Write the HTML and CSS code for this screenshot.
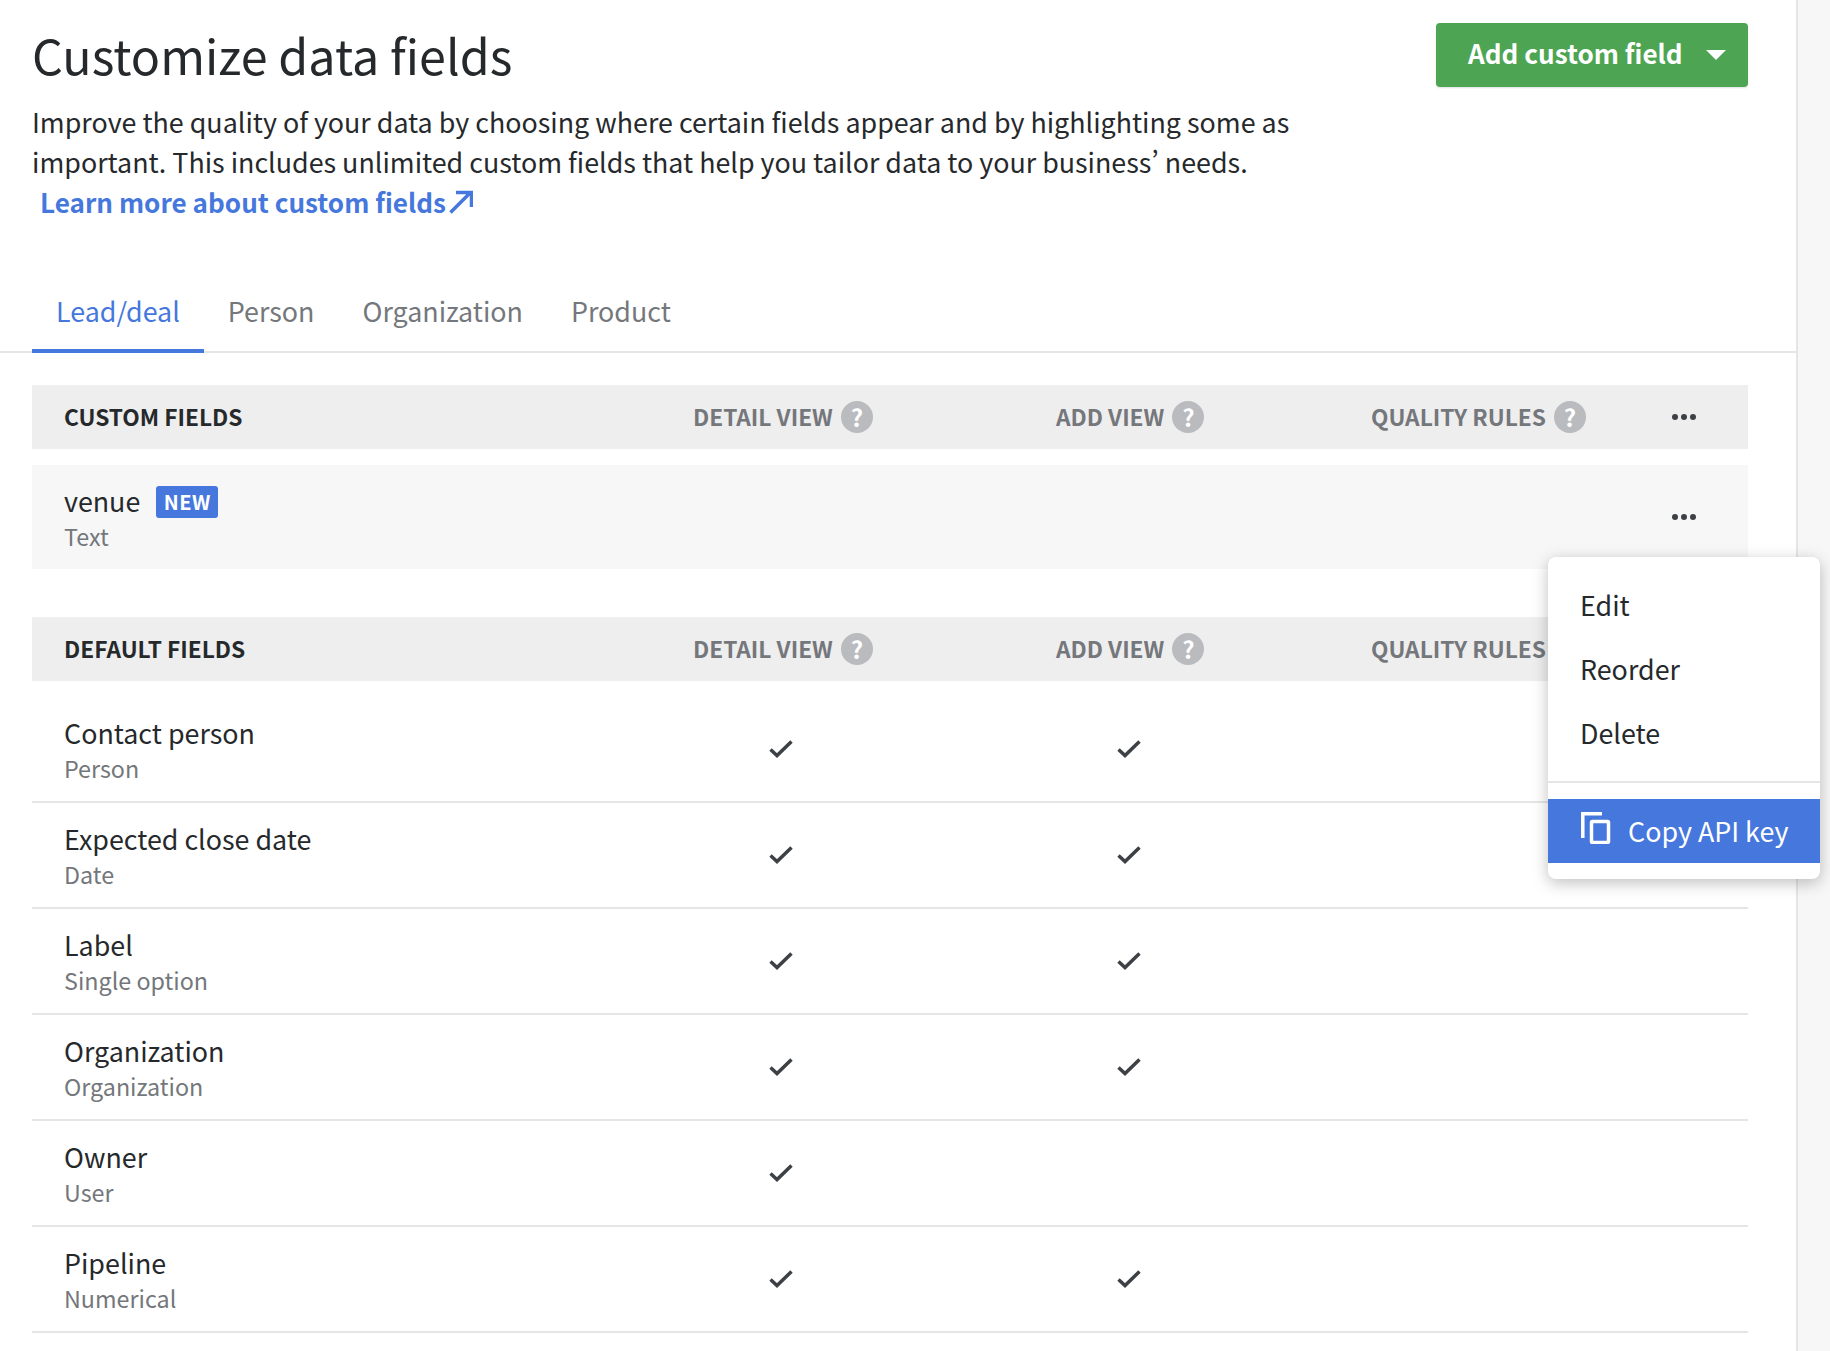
FILE: index.html
```html
<!DOCTYPE html>
<html lang="en">
<head>
<meta charset="UTF-8">
<meta name="viewport" content="width=device-width, initial-scale=1.0">
<title>Customize data fields</title>
<link rel="stylesheet" href="styles.css">
</head>
<body>
<div class="page">
    <main class="main">
        <header class="top">
            <div class="intro">
                <h1>Customize data fields</h1>
                <p>Improve the quality of your data by choosing where certain fields appear and by highlighting some as important. This includes unlimited custom fields that help you tailor data to your business’ needs.</p>
                <a class="learn" href="#">Learn more about custom fields<svg width="24" height="24" viewBox="0 0 24 24" fill="none" stroke="currentColor" stroke-width="3.500"><path d="M1.500 22.500 22 2M7 2.500h15.500V17"/></svg></a>
            </div>
            <button class="add-btn">Add custom field<span class="caret"></span></button>
        </header>

        <nav class="tabs">
            <a class="tab active" href="#">Lead/deal</a>
            <a class="tab" href="#">Person</a>
            <a class="tab" href="#">Organization</a>
            <a class="tab" href="#">Product</a>
        </nav>

        <section class="fields">
            <div class="row head">
                <div class="head-title">CUSTOM FIELDS</div>
                <div class="col-label">DETAIL VIEW<span class="help">?</span></div>
                <div class="col-label">ADD VIEW<span class="help">?</span></div>
                <div class="col-label">QUALITY RULES<span class="help">?</span></div>
                <div class="dots"><i></i><i></i><i></i></div>
            </div>
            <div class="row custom">
                <div>
                    <div class="name">venue<span class="badge">NEW</span></div>
                    <div class="type">Text</div>
                </div>
                <div></div><div></div><div></div>
                <div class="dots"><i></i><i></i><i></i></div>
            </div>
        </section>

        <section class="fields default">
            <div class="row head">
                <div class="head-title">DEFAULT FIELDS</div>
                <div class="col-label">DETAIL VIEW<span class="help">?</span></div>
                <div class="col-label">ADD VIEW<span class="help">?</span></div>
                <div class="col-label">QUALITY RULES</div>
                <div></div>
            </div>
            <div class="rows">
                <div class="row item">
                    <div><div class="name">Contact person</div><div class="type">Person</div></div>
                    <div class="check c1"><svg viewBox="0 0 24 18"><path d="M1.500 9.500 8 15.500 22.500 1.500"/></svg></div>
                    <div class="check c2"><svg viewBox="0 0 24 18"><path d="M1.500 9.500 8 15.500 22.500 1.500"/></svg></div>
                </div>
                <div class="row item">
                    <div><div class="name">Expected close date</div><div class="type">Date</div></div>
                    <div class="check c1"><svg viewBox="0 0 24 18"><path d="M1.500 9.500 8 15.500 22.500 1.500"/></svg></div>
                    <div class="check c2"><svg viewBox="0 0 24 18"><path d="M1.500 9.500 8 15.500 22.500 1.500"/></svg></div>
                </div>
                <div class="row item">
                    <div><div class="name">Label</div><div class="type">Single option</div></div>
                    <div class="check c1"><svg viewBox="0 0 24 18"><path d="M1.500 9.500 8 15.500 22.500 1.500"/></svg></div>
                    <div class="check c2"><svg viewBox="0 0 24 18"><path d="M1.500 9.500 8 15.500 22.500 1.500"/></svg></div>
                </div>
                <div class="row item">
                    <div><div class="name">Organization</div><div class="type">Organization</div></div>
                    <div class="check c1"><svg viewBox="0 0 24 18"><path d="M1.500 9.500 8 15.500 22.500 1.500"/></svg></div>
                    <div class="check c2"><svg viewBox="0 0 24 18"><path d="M1.500 9.500 8 15.500 22.500 1.500"/></svg></div>
                </div>
                <div class="row item">
                    <div><div class="name">Owner</div><div class="type">User</div></div>
                    <div class="check c1"><svg viewBox="0 0 24 18"><path d="M1.500 9.500 8 15.500 22.500 1.500"/></svg></div>
                    <div></div>
                </div>
                <div class="row item">
                    <div><div class="name">Pipeline</div><div class="type">Numerical</div></div>
                    <div class="check c1"><svg viewBox="0 0 24 18"><path d="M1.500 9.500 8 15.500 22.500 1.500"/></svg></div>
                    <div class="check c2"><svg viewBox="0 0 24 18"><path d="M1.500 9.500 8 15.500 22.500 1.500"/></svg></div>
                </div>
            </div>
        </section>
    </main>
    <div class="side"></div>
</div>

<!-- open row menu -->
<div class="menu">
    <a class="menu-item" href="#">Edit</a>
    <a class="menu-item" href="#">Reorder</a>
    <a class="menu-item" href="#">Delete</a>
    <div class="menu-line"></div>
    <a class="menu-item selected" href="#"><svg width="30" height="32" viewBox="0 0 30 32" fill="none" stroke="currentColor" stroke-width="3.500"><path d="M1.800 26V1.800H21"/><rect x="10.500" y="9.500" width="17" height="21" rx="1"/></svg>Copy API key</a>
</div>
</body>
</html>
```

FILE: styles.css
```css
* {
    box-sizing: border-box;
}

html, body {
    margin: 0;
    padding: 0;
    height: 1351px;
    overflow: hidden;
}

body {
    position: relative;
    font-family: "Noto Sans CJK SC", "Noto Sans", sans-serif;
    font-size: 26.85px;
    font-feature-settings: "pwid";
    color: #26292c;
    background-color: #ffffff;
}

a {
    text-decoration: none;
    color: inherit;
}

.page {
    display: flex;
    height: 1351px;
}

.main {
    width: 1798px;
    flex: none;
    border-right: 2px solid #e5e5e5;
}

.side {
    flex: 1;
    background-color: #f7f7f7;
}

/* header */
.top {
    display: flex;
    justify-content: space-between;
    align-items: flex-start;
    padding: 21px 48px 0 32px;
    height: 289px;
}

.intro {
    width: 1290px;
}

h1 {
    margin: 0;
    font-size: 48.4px;
    font-weight: 400;
    line-height: 66px;
}

.intro p {
    margin: 15px 0 0;
    line-height: 40px;
}

.learn {
    display: inline-flex;
    align-items: center;
    gap: 3px;
    margin-left: 8px;
    line-height: 40px;
    font-size: 26.1px;
    font-weight: 700;
    color: #4577dd;
}

.add-btn {
    display: flex;
    align-items: center;
    width: 312px;
    height: 64px;
    margin-top: 2px;
    padding: 0 0 4px 32px;
    border: 0;
    border-radius: 4px;
    font-family: inherit;
    font-size: 26.1px;
    font-weight: 700;
    color: #ffffff;
    background-color: #4da553;
    box-shadow: 0 1px 2px rgba(0, 0, 0, 0.12);
}

.caret {
    margin-left: 23px;
    margin-top: 4px;
    border-left: 10px solid transparent;
    border-right: 10px solid transparent;
    border-top: 10px solid #ffffff;
}

/* tabs */
.tabs {
    display: flex;
    height: 64px;
    padding-left: 32px;
    border-bottom: 2px solid #e5e5e5;
}

.tab {
    height: 64px;
    padding: 0 24px;
    line-height: 44px;
    color: #74777b;
}

.tab.active {
    color: #4577dd;
    border-bottom: 4px solid #4577dd;
}

/* field tables */
.fields {
    margin: 32px 48px 0 32px;
}

.fields.default {
    margin-top: 48px;
}

.row {
    display: grid;
    grid-template-columns: 629px 363px 315px 301px 76px;
    align-items: center;
    padding-left: 32px;
}

.head {
    height: 64px;
    padding-bottom: 2px;
    font-size: 22.7px;
    font-weight: 700;
    background-color: #eeeeee;
}

.col-label {
    display: flex;
    align-items: center;
    color: #74777b;
}

.help {
    display: inline-block;
    width: 32px;
    height: 32px;
    margin-left: 8px;
    margin-bottom: -2px;
    border-radius: 50%;
    font-size: 24px;
    line-height: 32px;
    text-align: center;
    color: #ffffff;
    background-color: #b9bbbe;
}

.dots {
    display: flex;
    gap: 3px;
}

.head .dots {
    margin-bottom: -2px;
}

.dots i {
    width: 6px;
    height: 6px;
    border-radius: 50%;
    background-color: #3d4044;
}

.custom {
    height: 104px;
    margin-top: 16px;
    background-color: #f7f7f7;
}

.name {
    display: flex;
    align-items: center;
    line-height: 38px;
}

.type {
    font-size: 23.3px;
    line-height: 32px;
    color: #74777b;
}

.badge {
    width: 62px;
    height: 32px;
    margin-left: 16px;
    margin-top: 2px;
    border-radius: 3px;
    font-size: 20px;
    font-weight: 700;
    line-height: 32px;
    text-align: center;
    letter-spacing: 0.5px;
    color: #ffffff;
    background-color: #4577dd;
}

.rows {
    padding-top: 16px;
}

.item {
    height: 106px;
    border-bottom: 2px solid #e5e5e5;
}

.check svg {
    display: block;
    width: 24px;
    height: 18px;
    fill: none;
    stroke: #3d4044;
    stroke-width: 3.500;
}

.check.c1 {
    padding-left: 76px;
}

.check.c2 {
    padding-left: 61px;
}

/* row menu */
.menu {
    position: absolute;
    left: 1548px;
    top: 557px;
    width: 272px;
    height: 322px;
    padding-top: 16px;
    border-radius: 8px;
    background-color: #ffffff;
    box-shadow: 0 4px 16px rgba(0, 0, 0, 0.25);
}

.menu-item {
    display: flex;
    align-items: center;
    height: 64px;
    padding: 0 0 2px 32px;
}

.menu-item svg {
    margin-left: 1px;
    margin-right: 17px;
    margin-top: -4px;
}

.menu-line {
    height: 2px;
    margin: 16px 0;
    background-color: #e5e5e5;
}

.menu-item.selected {
    color: #ffffff;
    background-color: #4577dd;
}
```
